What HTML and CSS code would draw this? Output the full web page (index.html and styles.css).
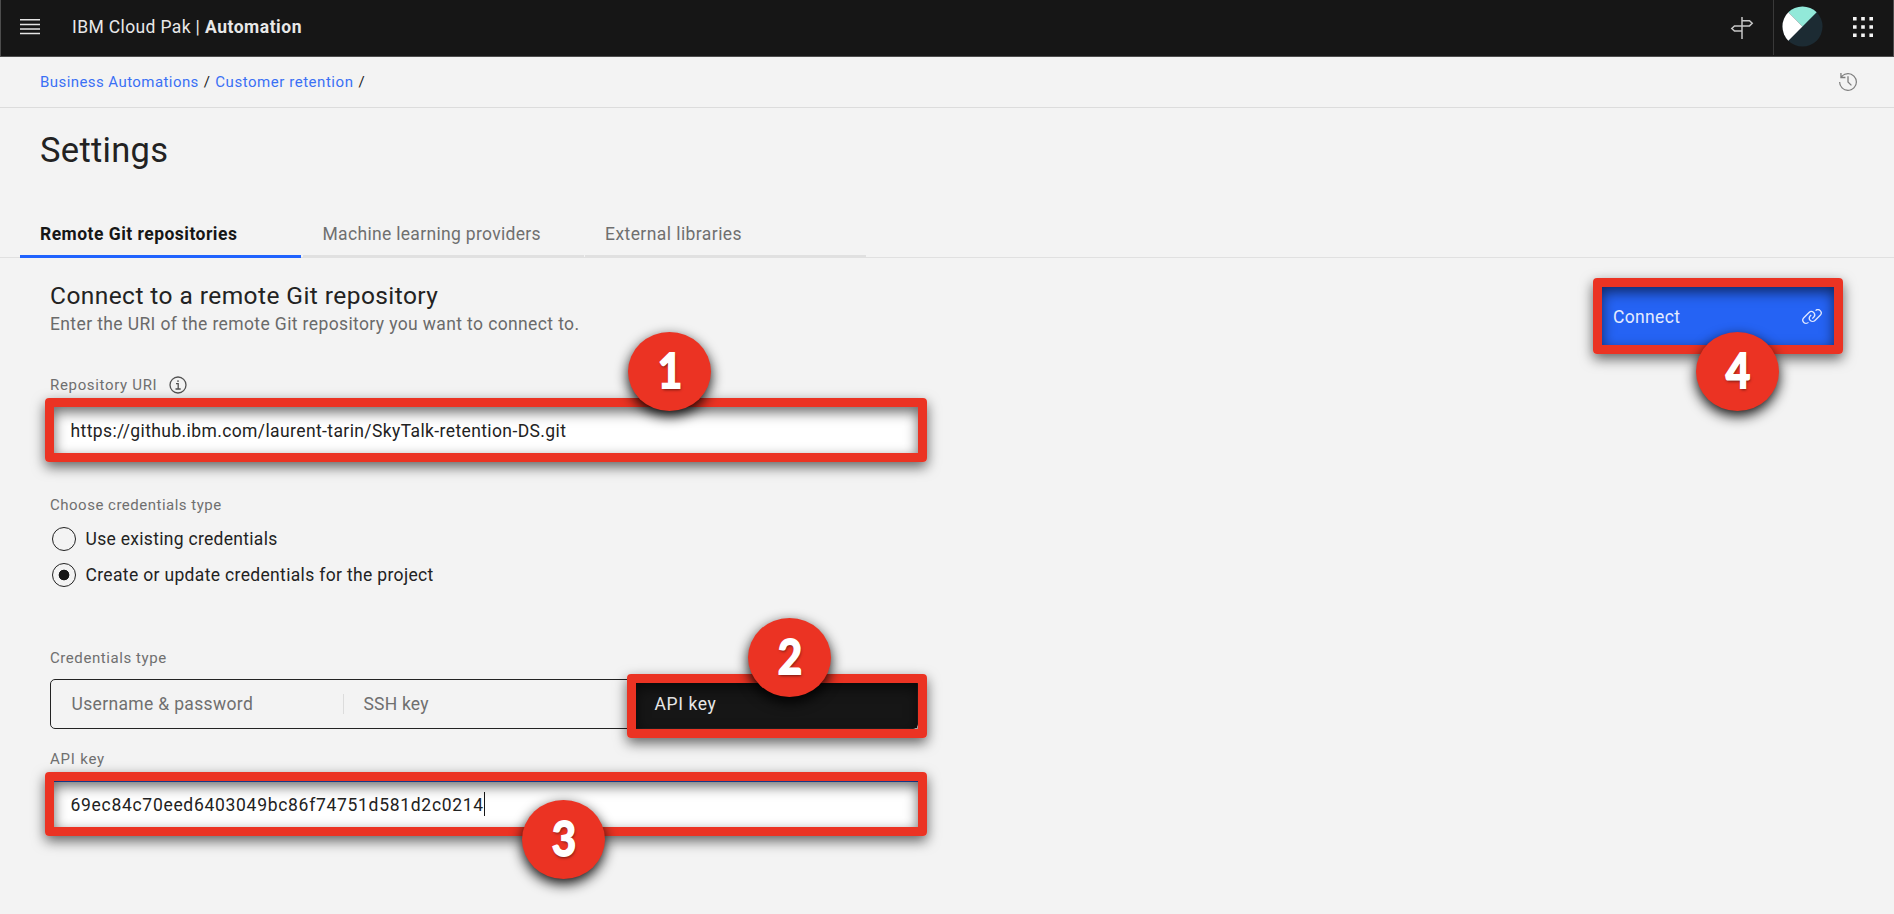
FILE: index.html
```html
<!DOCTYPE html>
<html lang="en">
<head>
<meta charset="utf-8">
<title>Settings</title>
<link rel="stylesheet" href="styles.css">
</head>
<body>
<header class="topbar">
  <svg class="menu-icon" width="20" height="16" viewBox="0 0 20 16"><path d="M0 .8h20M0 5.4h20M0 10h20M0 14.6h20" stroke="#e4e4e4" stroke-width="1.5"/></svg>
  <div class="product"><span class="product-name">IBM Cloud Pak | </span><b class="product-strong">Automation</b></div>
  <div class="topbar-right">
    <svg class="sign-icon" width="24" height="24" viewBox="0 0 24 24" fill="none" stroke="#c6c6c6" stroke-width="1.5"><path d="M12 1v22M12 4.700h7.500l2.700 2.600-2.700 2.600H12M12 9.900H4.500l-2.700 2.600 2.700 2.600H12"/></svg>
    <div class="avatar-cell"><svg width="41" height="41" viewBox="0 0 42 42"><circle cx="21" cy="21" r="20.500" fill="#1c2b33"/><path d="M6.500 6.500A20.500 20.500 0 0 1 35.500 6.500L21 21z" fill="#92e9d9"/><path d="M6.500 6.500A20.500 20.500 0 0 0 6.500 35.500L21 21z" fill="#fff"/></svg></div>
    <svg class="apps-icon" width="20" height="20" viewBox="0 0 20 20" fill="#f4f4f4"><path d="M0 0h3.600v3.600H0zM8.200 0h3.600v3.600H8.200zM16.400 0H20v3.600h-3.600zM0 8.200h3.600v3.600H0zM8.200 8.200h3.600v3.600H8.200zM16.400 8.200H20v3.600h-3.600zM0 16.400h3.600V20H0zM8.200 16.400h3.600V20H8.200zM16.400 16.400H20V20h-3.600z"/></svg>
  </div>
</header>
<nav class="crumbs">
  <a class="crumb crumb-root">Business Automations</a><span class="slash">/</span><a class="crumb crumb-leaf">Customer retention</a><span class="slash">/</span>
  <svg class="history-icon" width="18" height="18" viewBox="2 2 28 28" fill="#7d7d7d"><path d="M20.590 22 15 16.410V7h2v8.580l5 5.010zM16 2A13.940 13.940 0 0 0 6 6.230V2H4v8h8V8H7.080A12 12 0 1 1 4 16H2A14 14 0 1 0 16 2Z"/></svg>
</nav>
<h1 class="page-title"><span>Settings</span></h1>
<div class="tabs">
  <div class="tab tab-active"><span>Remote Git repositories</span></div>
  <div class="tab"><span class="tab-ml">Machine learning providers</span></div>
  <div class="tab"><span class="tab-lib">External libraries</span></div>
</div>
<main class="content">
  <form class="form">
    <h2 class="heading"><span>Connect to a remote Git repository</span></h2>
    <p class="hint"><span>Enter the URI of the remote Git repository you want to connect to.</span></p>
    <div class="label label-uri"><span>Repository URI</span><svg width="18" height="18" viewBox="0 0 18 18" fill="none" stroke="#525252" stroke-width="1.300"><circle cx="9" cy="9" r="8"/><path d="M7 7.700h2.200v5.300M6.500 13h5.200M9 4.200v1.700"/></svg></div>
    <div class="field"><span class="uri">https://github.ibm.com/laurent-tarin/SkyTalk-retention-DS.git</span>
      <div class="highlight"></div><div class="badge badge-1"><span>1</span></div></div>
    <div class="label label-choose"><span>Choose credentials type</span></div>
    <div class="radio"><i class="dot"></i><span class="opt-existing">Use existing credentials</span></div>
    <div class="radio radio-on"><i class="dot"></i><span class="opt-create">Create or update credentials for the project</span></div>
    <div class="label label-type"><span>Credentials type</span></div>
    <div class="switcher">
      <div class="switch switch-user"><span class="sw-user">Username &amp; password</span><i class="divider"></i></div>
      <div class="switch switch-ssh"><span class="sw-ssh">SSH key</span></div>
      <div class="switch switch-on"><span class="sw-api">API key</span><div class="highlight highlight-switch"></div><div class="badge badge-2"><span>2</span></div></div>
    </div>
    <div class="label label-key"><span>API key</span></div>
    <div class="field field-focus"><span class="key">69ec84c70eed6403049bc86f74751d581d2c0214</span><i class="caret"></i>
      <div class="highlight"></div><div class="badge badge-3"><span>3</span></div></div>
  </form>
  <div class="connect"><span class="connect-text">Connect</span>
    <svg class="link-icon" width="20" height="15" viewBox="1 5 30 23" fill="#dfe8ff"><path d="M29.250 6.760a6 6 0 0 0-8.500 0l1.420 1.420a4 4 0 1 1 5.670 5.670l-8 8a4 4 0 1 1-5.670-5.660l1.410-1.420-1.410-1.420-1.420 1.420a6 6 0 0 0 0 8.500A6 6 0 0 0 17 25a6 6 0 0 0 4.270-1.760l8-8a6 6 0 0 0-.020-8.480Z"/><path d="M4.190 24.820a4 4 0 0 1 0-5.670l8-8a4 4 0 0 1 5.670 0A3.940 3.940 0 0 1 19 14a4 4 0 0 1-1.170 2.850L15.710 19l1.420 1.420 2.120-2.120a6 6 0 0 0-8.510-8.510l-8 8a6 6 0 0 0 0 8.510A6 6 0 0 0 7 28a6.070 6.070 0 0 0 4.280-1.760L9.860 24.820a4 4 0 0 1-5.670 0Z"/></svg>
    <div class="highlight"></div><div class="badge badge-4"><span>4</span></div></div>
</main>
</body>
</html>
```
FILE: styles.css
```css
* { box-sizing: border-box; }
body { margin: 0; width: 1894px; height: 914px; overflow: hidden; background: #f3f3f3; color: #222; font-family: Roboto, "Liberation Sans", sans-serif; font-size: 17.5px; letter-spacing: .34px; }
h1, h2, p { margin: 0; font-weight: 400; }
svg { display: block; flex: none; }
span { white-space: pre; }

.topbar { display: flex; align-items: center; height: 57px; padding: 0 0 3px 19px; background: #161616; border: 1px solid #4d4d4d; border-top: 0; color: #e8e8e8; }
.product { display: flex; margin-left: 32px; padding-top: 1px; }
.product-name { letter-spacing: .37px; }
.product-strong { letter-spacing: .52px; }
.topbar-right { display: flex; align-items: center; height: 56px; margin-left: auto; }
.sign-icon { margin-right: 19px; margin-top: 2px; }
.avatar-cell { display: flex; align-items: center; height: 57px; padding: 0 0 1px 8px; border-left: 1px solid #393939; }
.apps-icon { margin: 0 20px 0 30px; }

.crumbs { display: flex; align-items: center; height: 51px; padding: 0 37px 1px 40px; border-bottom: 1px solid #dcdcdc; font-size: 15px; }
.crumb { color: #3a70f5; }
.crumb-root { letter-spacing: .43px; }
.crumb-leaf { letter-spacing: .54px; }
.slash { width: 16.5px; text-align: center; }
.history-icon { margin-left: auto; }

.page-title { height: 102px; padding: 23px 0 0 40px; font-size: 34.5px; line-height: 39px; letter-spacing: .3px; }

.tabs { display: flex; gap: 1.5px; height: 48px; padding-left: 20px; border-bottom: 1px solid #e0e0e0; }
.tab { width: 281px; height: 48px; padding: 14px 0 0 20px; line-height: 20px; color: #6f6f6f; border-bottom: 3px solid #e0e0e0; }
.tab-active { color: #161616; font-weight: 700; letter-spacing: .48px; border-color: #1f62fe; }
.tab-ml { letter-spacing: .32px; }
.tab-lib { letter-spacing: .43px; }

.content { display: flex; justify-content: space-between; align-items: flex-start; padding: 20px 60px 0 50px; }
.form { width: 868px; }
.heading { height: 36px; font-size: 24.5px; line-height: 35px; letter-spacing: .43px; }
.hint { height: 20px; line-height: 20px; letter-spacing: .38px; color: #6a6a6a; }
.label { display: flex; height: 20px; font-size: 15px; line-height: 19px; letter-spacing: .57px; color: #6f6f6f; }
.label-uri { gap: 12px; margin-top: 42px; letter-spacing: .67px; }
.label-choose { margin-top: 43px; letter-spacing: .5px; }
.label-type { margin-top: 62px; }
.label-key { margin-top: 21px; letter-spacing: .79px; }

.field { position: relative; display: flex; align-items: center; height: 46px; margin-top: 11px; padding-left: 20.5px; background: #fff; }
.field-focus { box-shadow: inset 0 1px #2563f4; }
.uri { padding-top: 1px; letter-spacing: .39px; }
.key { padding-top: 2px; letter-spacing: .7px; }
.caret { width: 1px; height: 24px; background: #161616; }

.radio { display: flex; align-items: center; gap: 9.5px; height: 24px; margin-top: 11px; padding-left: 2px; }
.radio-on { margin-top: 12px; }
.dot { width: 24px; height: 24px; border: 1.3px solid #222; border-radius: 50%; }
.radio-on .dot { background: radial-gradient(circle, #161616 5px, transparent 5.7px); }
.opt-existing { letter-spacing: .3px; }

.switcher { display: flex; width: 868px; height: 50px; margin-top: 10px; border: 1px solid #222; border-radius: 5px; }
.switch { position: relative; display: flex; align-items: center; padding-left: 19.5px; color: #6f6f6f; }
.switch-user { width: 293px; padding-left: 20.5px; }
.switch-ssh { width: 290px; }
.switch-on { flex: 1; padding-left: 20.5px; background: #161616; color: #e8e8e8; }
.divider { width: 1px; height: 20px; margin-left: auto; background: #dcdcdc; }
.sw-ssh { letter-spacing: .2px; }
.sw-api { letter-spacing: .6px; }

.connect { position: relative; display: flex; align-items: center; justify-content: space-between; width: 232px; height: 58px; margin-top: 9px; padding: 0 12.5px 0 11px; background: #2563f4; color: #e4ecff; }
.connect-text { padding-top: 1px; }

/* Annotations over the form */
.highlight { position: absolute; inset: -9px -9px -9px -5px; border: 9px solid #eb3323; border-radius: 4px; box-shadow: 0 5px 13px rgba(0,0,0,.6), inset 0 5px 13px rgba(0,0,0,.6); }
.connect .highlight { left: -9px; }
.highlight-switch { inset: -6px -10px -10px -7px; }
.badge { position: absolute; z-index: 1; width: 83px; height: 79px; border-radius: 50%; background: #eb3323; box-shadow: 0 5px 13px rgba(0,0,0,.95); color: #fff; font: 700 48px/76px Lato, sans-serif; letter-spacing: 0; text-align: center; text-shadow: 1px 2px 3px rgba(0,0,0,.5); -webkit-text-stroke: 1.8px #fff; }
.badge span { display: inline-block; transform: scaleX(.88); }
.badge-1 { left: 578px; top: -75px; }
.badge-2 { left: 114px; top: -62px; }
.badge-3 { left: 472px; top: 19px; }
.badge-4 { left: 94px; top: 45px; }
```
